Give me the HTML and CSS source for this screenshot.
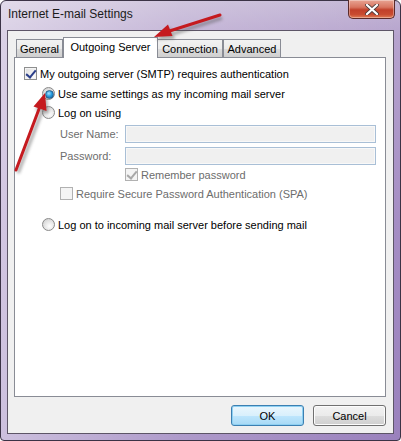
FILE: index.html
```html
<!DOCTYPE html>
<html>
<head>
<meta charset="utf-8">
<link rel="stylesheet" href="styles.css">
</head>
<body>
<div class="window">
  <div class="titlebar">
    <span class="title">Internet E-mail Settings</span>
    <div class="close"><svg width="14" height="11" viewBox="0 0 14 11"><path d="M2 1 L12 10 M12 1 L2 10" stroke="#4a3a3a" stroke-width="3.8" stroke-linecap="round"/><path d="M2 1 L12 10 M12 1 L2 10" stroke="#fff" stroke-width="2.3" stroke-linecap="round"/></svg></div>
  </div>
  <div class="client">
    <div class="tabs">
      <div class="tab t-general">General</div>
      <div class="tab active">Outgoing Server</div>
      <div class="tab t-conn">Connection</div>
      <div class="tab t-adv">Advanced</div>
    </div>
    <div class="panel">
      <label class="row r-auth"><span class="cb checked"></span><span>My outgoing server (SMTP) requires authentication</span></label>
      <div class="group">
        <label class="row r-same"><span class="rd on"></span><span>Use same settings as my incoming mail server</span></label>
        <label class="row r-logon"><span class="rd"></span><span>Log on using</span></label>
        <div class="fields">
          <div class="field f-user"><span class="flabel">User Name:</span><span class="input"></span></div>
          <div class="field f-pass"><span class="flabel">Password:</span><span class="input"></span></div>
          <label class="row r-remember disabled"><span class="cb checked dis"></span><span>Remember password</span></label>
          <label class="row r-spa disabled"><span class="cb dis"></span><span>Require Secure Password Authentication (SPA)</span></label>
        </div>
        <label class="row r-before"><span class="rd"></span><span>Log on to incoming mail server before sending mail</span></label>
      </div>
    </div>
    <div class="buttons">
      <div class="btn default">OK</div>
      <div class="btn">Cancel</div>
    </div>
  </div>
  <svg class="arrows" width="401" height="441" viewBox="0 0 401 441">
    <defs>
      <filter id="sh" x="-20%" y="-20%" width="140%" height="140%"><feGaussianBlur stdDeviation="1.6"/></filter>
    </defs>
    <g opacity="0.45" filter="url(#sh)" transform="translate(2,3)">
      <path d="M220 15 L170 31" stroke="#555" stroke-width="3.5" fill="none"/>
      <path d="M154 37 L168 24 L173 36 Z" fill="#555"/>
      <path d="M16 170 L40 108" stroke="#555" stroke-width="3.5" fill="none"/>
      <path d="M45 93 L33 107 L47 111 Z" fill="#555"/>
    </g>
    <path d="M220 15 L168 31.5" stroke="#c51a1f" stroke-width="3" fill="none" stroke-linecap="round"/>
    <path d="M154 37 L168 24.5 L172.5 36 Z" fill="#c51a1f"/>
    <path d="M16 170 L39 109" stroke="#c51a1f" stroke-width="3" fill="none" stroke-linecap="round"/>
    <path d="M45 93 L33.5 106.5 L46.5 111 Z" fill="#c51a1f"/>
  </svg>
</div>
</body>
</html>
```

FILE: styles.css
```css
* { box-sizing: border-box; }
html, body { margin: 0; padding: 0; }
body { width: 401px; height: 441px; overflow: hidden; background: #fff; }

.window {
  position: relative;
  width: 401px;
  height: 441px;
  display: flex;
  flex-direction: column;
  background:
    linear-gradient(90deg, rgba(255,255,255,0.5) 0%, rgba(255,255,255,0.2) 45%, rgba(255,255,255,0) 100%),
    linear-gradient(180deg, #c4b7d6 0%, #b6a3cd 8%, #a58dc4 50%, #9a81bd 100%);
  border: 1px solid #3b3346;
  border-radius: 6px 6px 4px 4px;
  font-family: "Liberation Sans", Arial, sans-serif;
}

.titlebar {
  height: 29px;
  display: flex;
  align-items: flex-start;
  justify-content: space-between;
  padding-left: 7px;
}
.title {
  margin-top: 6px;
  font-size: 12px;
  color: #1b1b1b;
}
.close {
  width: 47px;
  height: 19px;
  margin-right: 5px;
  margin-top: -1px;
  border: 1px solid #5a2a2a;
  border-top: none;
  border-radius: 0 0 5px 5px;
  background: linear-gradient(180deg, #e8a493 0%, #d87560 40%, #c1402a 55%, #c84b30 80%, #e07c55 100%);
  display: flex;
  align-items: center;
  justify-content: center;
  box-shadow: inset 0 0 0 1px rgba(255,255,255,0.35);
}

.client {
  margin: 0 6px 6px 6px;
  flex: 1;
  background: #f0f0f0;
  border: 1px solid #5d5567;
  display: flex;
  flex-direction: column;
  padding: 6px 7px 7px 6px;
  font-size: 11px;
  color: #000;
}

.tabs {
  display: flex;
  align-items: flex-end;
  height: 20px;
  padding-left: 2px;
  position: relative;
  z-index: 2;
}
.tab {
  height: 18px;
  border: 1px solid #898c95;
  border-bottom: none;
  background: linear-gradient(180deg, #f2f2f2 0%, #ebebeb 50%, #dddddd 51%, #cfcfcf 100%);
  display: flex;
  align-items: center;
  justify-content: center;
  font-size: 11px;
  color: #000;
  white-space: nowrap;
  padding-top: 1px;
}
.t-general { width: 47px; }
.tab.active {
  width: 95px;
  height: 21px;
  margin-bottom: -1px;
  background: #fff;
  padding-top: 0;
  padding-bottom: 3px;
  position: relative;
  z-index: 3;
}
.t-conn { width: 66px; margin-left: -1px; }
.t-adv { width: 58px; }

.panel {
  height: 340px;
  background: #fff;
  border: 1px solid #898c95;
  padding: 9px 9px 0 9px;
  position: relative;
  z-index: 1;
}

.row {
  display: flex;
  align-items: center;
  height: 13px;
  font-size: 11px;
  white-space: nowrap;
}
.row > span:last-child { margin-left: 3px; }
.disabled { color: #6d6d6d; }

.cb {
  width: 13px;
  height: 13px;
  border: 1px solid #8e8f8f;
  background: linear-gradient(135deg, #dcdcdc 0%, #f4f4f4 60%, #fff 100%);
  box-shadow: inset 0 0 0 1px #f4f4f4;
  position: relative;
  flex: none;
}
.cb.checked::after {
  content: "";
  position: absolute;
  left: 3px;
  top: 0px;
  width: 4px;
  height: 8px;
  border-right: 2px solid #2b3f8a;
  border-bottom: 2px solid #2b3f8a;
  transform: rotate(40deg);
}
.cb.dis { border-color: #b1b1b1; background: #f4f4f4; box-shadow: none; }
.cb.dis.checked::after { border-color: #a8a8a8; }

.rd {
  width: 13px;
  height: 13px;
  border-radius: 50%;
  border: 1px solid #8a8a8a;
  background: radial-gradient(circle at 60% 65%, #fff 0%, #e8e8e8 45%, #c8c8c8 100%);
  flex: none;
  position: relative;
}
.rd.on::after {
  content: "";
  position: absolute;
  left: 2px;
  top: 2px;
  width: 7px;
  height: 7px;
  border-radius: 50%;
  background: radial-gradient(circle at 40% 35%, #a9e2ff 0%, #2a9ee0 45%, #0f5a9a 100%);
  border: 1px solid #2b5f8a;
}

.group { padding-left: 18px; }
.r-same { margin-top: 7px; }
.r-logon { margin-top: 6px; }
.r-before { margin-top: 18px; }

.fields { padding-left: 18px; margin-top: 6px; }
.field {
  display: flex;
  align-items: center;
  height: 18px;
}
.f-pass { margin-top: 4px; }
.flabel {
  width: 65px;
  color: #6d6d6d;
  font-size: 11px;
}
.input {
  width: 252px;
  height: 18px;
  border: 1px solid #a9bfd6;
  background: #f0f0f0;
  box-shadow: inset 0 0 0 1px #f8f8f8;
}
.r-remember { margin-left: 65px; margin-top: 3px; }
.r-spa { margin-top: 6px; }

.buttons {
  display: flex;
  justify-content: flex-end;
  gap: 9px;
  margin-top: 8px;
}
.btn {
  width: 73px;
  height: 21px;
  border: 1px solid #707070;
  border-radius: 3px;
  background: linear-gradient(180deg, #f2f2f2 0%, #ebebeb 50%, #dddddd 51%, #cfcfcf 100%);
  box-shadow: inset 0 0 0 1px #fcfcfc;
  display: flex;
  align-items: center;
  justify-content: center;
  font-size: 11px;
  color: #000;
}
.btn.default {
  border-color: #3c7fb1;
  background: linear-gradient(180deg, #eaf6fd 0%, #d9f0fc 50%, #bee6fd 51%, #a7d9f5 100%);
  box-shadow: inset 0 0 0 1px #8ed0f2;
}

.arrows {
  position: absolute;
  left: -1px;
  top: -1px;
  pointer-events: none;
  z-index: 10;
}
```
